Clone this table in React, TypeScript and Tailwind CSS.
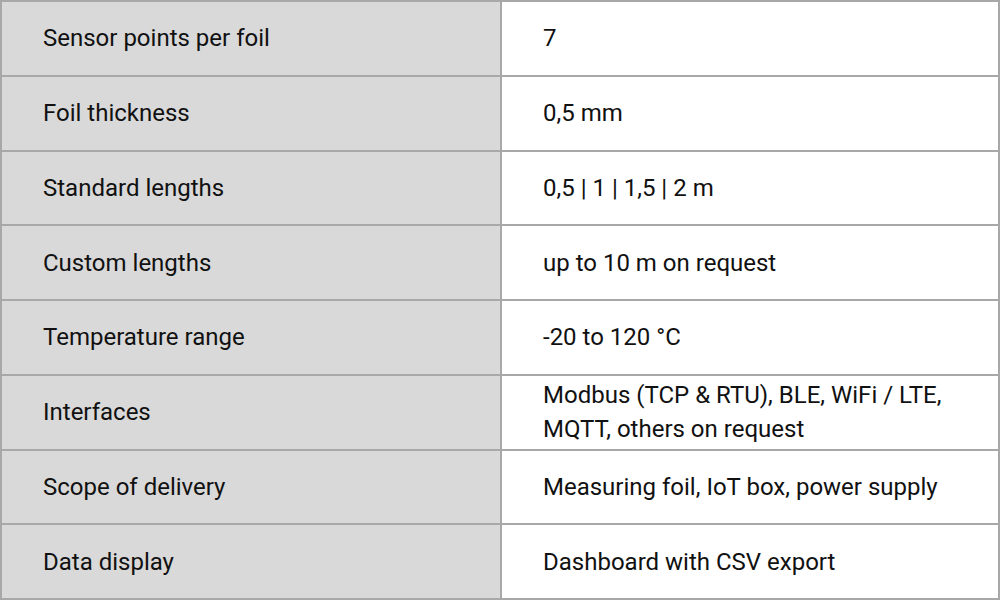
const rows: [string, string][] = [
  ["Sensor points per foil", "7"],
  ["Foil thickness", "0,5 mm"],
  ["Standard lengths", "0,5 | 1 | 1,5 | 2 m"],
  ["Custom lengths", "up to 10 m on request"],
  ["Temperature range", "-20 to 120 °C"],
  ["Interfaces", "Modbus (TCP & RTU), BLE, WiFi / LTE, MQTT, others on request"],
  ["Scope of delivery", "Measuring foil, IoT box, power supply"],
  ["Data display", "Dashboard with CSV export"],
];

export default function App() {
  return (
    <div className="w-[1000px] h-[600px] bg-white font-['Roboto',sans-serif] text-[24px] leading-[34px] text-[#111]">
      <table className="w-full border-collapse border-2 border-[#a8a8a8] table-fixed">
        <tbody>
          {rows.map(([label, value]) => (
            <tr key={label} className="h-[74.75px]">
              <td className="w-[500px] bg-[#d9d9d9] border-2 border-[#a8a8a8] pl-[41px] pr-4 py-0 align-middle">
                {label}
              </td>
              <td className="bg-white border-2 border-[#a8a8a8] pl-[41px] pr-12 py-0 align-middle">
                {value}
              </td>
            </tr>
          ))}
        </tbody>
      </table>
    </div>
  );
}
